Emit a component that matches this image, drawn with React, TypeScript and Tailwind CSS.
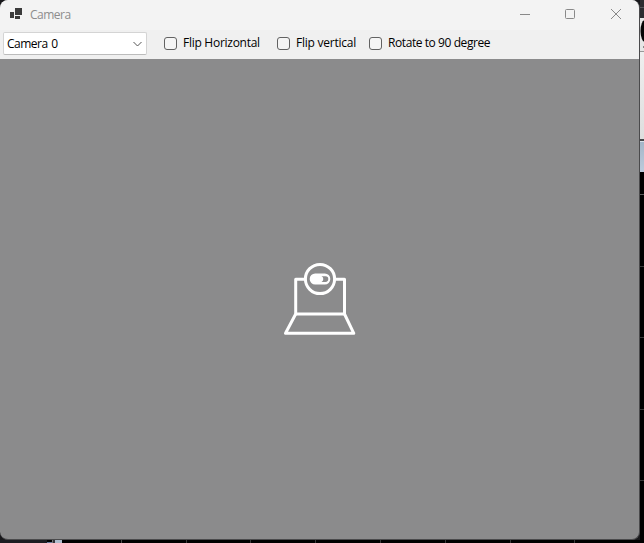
import React from 'react';

const font = "font-['Open_Sans','Noto_Sans',sans-serif]";

function CheckOption({ label, width, tracking }: { label: string; width: string; tracking: string }) {
  return (
    <label className={`flex h-[14px] shrink-0 items-center ${width}`}>
      <span className="h-[13px] w-[13px] shrink-0 rounded-[3px] border border-[#626262] bg-[#f5f5f5]" />
      <span className={`ml-[6px] whitespace-nowrap text-[12px] leading-[14px] text-black ${tracking}`}>{label}</span>
    </label>
  );
}

function TitleBar() {
  return (
    <header className="flex h-[30px] shrink-0 items-center bg-[#f3f3f3]">
      <svg className="ml-[10px] h-[14px] w-[13px] shrink-0" viewBox="0 0 13 14" fill="#3b3b3b" shapeRendering="crispEdges">
        <path d="M5 0h7v7H5zM0 4h4v6H0zM5 8h5v3H5z" />
      </svg>
      <h1 className="ml-[7px] text-[12px] leading-[14px] tracking-[-0.5px] text-[#8d8d8d]">Camera</h1>
      <svg className="ml-auto mr-[16px] h-[12px] w-[103px] shrink-0" viewBox="0 0 103 12" fill="none" stroke="#898989">
        <path d="M0 5.5h10" />
        <rect x="45.500" y="0.500" width="9" height="9" rx="1" />
        <path d="M91 0l10 10M101 0L91 10" />
      </svg>
    </header>
  );
}

function Toolbar() {
  return (
    <div className="flex h-[29px] shrink-0 items-start bg-[#f0f0f0] pl-[3px] pt-[2px]">
      <div className="flex h-[23px] w-[144px] shrink-0 items-center rounded-[2px] border border-[#d4d4d4] border-b-[#bcbcbc] bg-white pl-[3px] pr-[4px]">
        <span className="text-[12px] leading-[14px] tracking-[-0.5px] [word-spacing:1px] text-black">Camera 0</span>
        <svg className="ml-auto h-[6px] w-[9px]" viewBox="0 0 9 6" fill="none" stroke="#555">
          <path d="M.5 1l4 4 4-4" />
        </svg>
      </div>
      <div className="ml-[17px] mt-[4px] flex">
        <CheckOption label="Flip Horizontal" width="w-[113px]" tracking="tracking-[-0.27px]" />
        <CheckOption label="Flip vertical" width="w-[92px]" tracking="tracking-[-0.24px]" />
        <CheckOption label="Rotate to 90 degree" width="w-[130px]" tracking="tracking-[-0.42px]" />
      </div>
    </div>
  );
}

function WebcamIcon() {
  return (
    <svg className="h-[74px] w-[75px]" viewBox="0 0 75 74" fill="none" stroke="white" strokeWidth="3" strokeLinejoin="round">
      <path d="M23 17.300H13.700V52H62.500V17.300H53" />
      <path d="M13.700 52L3.500 71.300H71.800L62.500 52" />
      <circle cx="38" cy="17" r="14.600" />
      <rect x="27.700" y="11.500" width="20.600" height="11" rx="5.500" fill="white" stroke="none" />
      <path d="M39.500 14.300h4a2.800 2.800 0 010 5.600h-4q1.800-.6 1.800-2.800t-1.800-2.800z" fill="#8b8b8c" stroke="none" />
    </svg>
  );
}

function BackdropEdge() {
  return (
    <aside className="flex h-[543px] w-[4px] flex-col overflow-hidden bg-black">
      <div className="h-[7px] shrink-0 bg-[#2c2c30]" />
      <div className="h-px shrink-0 bg-[#55555a]" />
      <div className="h-[10px] shrink-0 bg-[#2c2c30]" />
      <div className="h-[33px] shrink-0 bg-[#e6e6e6]">
        <svg className="h-[33px] w-[4px]" viewBox="0 0 4 33">
          <ellipse cx="5" cy="13" rx="4.500" ry="11" fill="#050505" />
          <path d="M3 28h1v2H3z" fill="#888" />
        </svg>
      </div>
      <div className="h-px shrink-0 bg-[#999]" />
      <div className="h-[87px] shrink-0 bg-linear-to-b from-[#efefef] to-[#dedede]" />
      <div className="h-[2px] shrink-0 bg-[#47474a]" />
      <div className="h-px shrink-0 bg-[#d9e1e9]" />
      <div className="h-[30px] shrink-0 bg-linear-to-b from-[#a4b6c8] to-[#bccbdc]" />
      <div className="h-[22px] shrink-0 bg-black" />
      <div className="h-px shrink-0 bg-[#5a5a5a]" />
      <div className="mt-[71px] h-px shrink-0 bg-[#373737]" />
      <div className="mt-[70px] h-px shrink-0 bg-[#373737]" />
      <div className="mt-[71px] h-px shrink-0 bg-[#373737]" />
      <div className="mt-[70px] h-px shrink-0 bg-[#373737]" />
    </aside>
  );
}

function BottomEdge() {
  return (
    <div className="flex h-[3px] bg-black">
      <div className="h-[3px] w-[47px] bg-[#1c1d22]" />
      <div className="mt-[2px] h-px w-[5px] bg-[#66799d]" />
      <div className="h-[3px] w-px bg-[#777]" />
      <div className="h-[3px] w-[2px] bg-[#34343a]" />
      <div className="h-[3px] w-[7px] bg-[#aebccc]" />
      <div className="ml-[59px] w-px bg-[#4b4b4b]" />
      <div className="ml-[64px] w-px bg-[#393939]" />
      <div className="ml-[63px] w-px bg-[#393939]" />
      <div className="ml-[64px] w-px bg-[#393939]" />
      <div className="ml-[64px] w-px bg-[#393939]" />
      <div className="ml-[64px] w-px bg-[#393939]" />
      <div className="ml-[64px] w-px bg-[#393939]" />
      <div className="ml-[63px] w-px bg-[#393939]" />
    </div>
  );
}

export default function App() {
  return (
    <div className={`flex h-[543px] w-[644px] overflow-hidden bg-black ${font}`}>
      <div className="w-[640px] shrink-0 bg-[#18181b]">
        <main className="flex h-[540px] w-[640px] flex-col overflow-hidden rounded-[8px] border-b border-r border-[#4a4a4c] bg-[#8b8b8c]">
          <TitleBar />
          <Toolbar />
          <section className="flex flex-1 items-center justify-center">
            <WebcamIcon />
          </section>
        </main>
        <BottomEdge />
      </div>
      <BackdropEdge />
    </div>
  );
}
